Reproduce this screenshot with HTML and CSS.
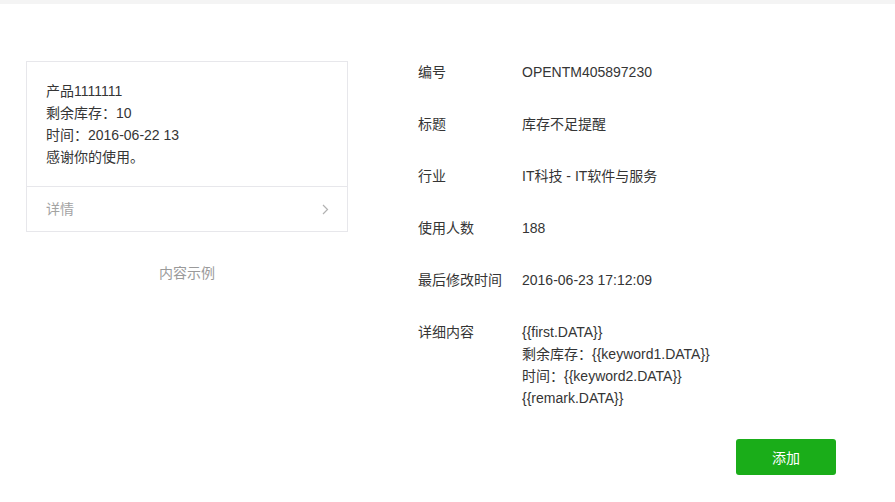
FILE: index.html
```html
<!DOCTYPE html>
<html lang="zh-CN">
<head>
<meta charset="utf-8">
<link rel="stylesheet" href="styles.css">
</head>
<body>
<div class="topbar"></div>
<div class="main">
  <div class="preview">
    <div class="card">
      <div class="card-body">
        <p>产品1111111</p>
        <p>剩余库存：10</p>
        <p>时间：2016-06-22 13</p>
        <p>感谢你的使用。</p>
      </div>
      <div class="card-foot">
        <span>详情</span>
        <svg class="chev" width="7" height="11" viewBox="0 0 7 11"><path d="M1 1l4.5 4.5L1 10" fill="none" stroke="#b2b2b2" stroke-width="1.2"/></svg>
      </div>
    </div>
    <div class="caption">内容示例</div>
  </div>
  <div class="info">
    <div class="row"><div class="label">编号</div><div class="value">OPENTM405897230</div></div>
    <div class="row"><div class="label">标题</div><div class="value">库存不足提醒</div></div>
    <div class="row"><div class="label">行业</div><div class="value">IT科技 - IT软件与服务</div></div>
    <div class="row"><div class="label">使用人数</div><div class="value">188</div></div>
    <div class="row"><div class="label">最后修改时间</div><div class="value">2016-06-23 17:12:09</div></div>
    <div class="row"><div class="label">详细内容</div><div class="value">{{first.DATA}}<br>剩余库存：{{keyword1.DATA}}<br>时间：{{keyword2.DATA}}<br>{{remark.DATA}}</div></div>
    <div class="actions"><button class="btn">添加</button></div>
  </div>
</div>
</body>
</html>
```
FILE: styles.css
```css
html, body {
  margin: 0;
  padding: 0;
  background: #fff;
}
body {
  font-family: "Liberation Sans", Arial, "Noto Sans CJK SC", sans-serif;
  font-size: 14px;
  line-height: 22px;
  color: #353535;
}
.topbar {
  height: 4px;
  background: #f4f4f4;
}
.main {
  display: flex;
  padding: 57px 0 0 26px;
}
.preview {
  width: 322px;
  flex: none;
}
.card {
  border: 1px solid #e7e7eb;
}
.card-body {
  padding: 18px 19px;
}
.card-body p {
  margin: 0;
}
.card-foot {
  border-top: 1px solid #e7e7eb;
  height: 44px;
  margin: 0;
  padding: 0 18px 0 19px;
  display: flex;
  align-items: center;
  justify-content: space-between;
  color: #a3a3a3;
}
.caption {
  margin-top: 30px;
  text-align: center;
  color: #9a9a9a;
}
.info {
  margin-left: 70px;
  width: 418px;
}
.row {
  display: flex;
  margin-bottom: 30px;
}
.label {
  width: 104px;
  flex: none;
}
.actions {
  display: flex;
  justify-content: flex-end;
}
.btn {
  width: 100px;
  height: 36px;
  border: 0;
  border-radius: 3px;
  background: #1aad19;
  color: #fff;
  font-family: inherit;
  font-size: 14px;
  padding: 0;
}
```
